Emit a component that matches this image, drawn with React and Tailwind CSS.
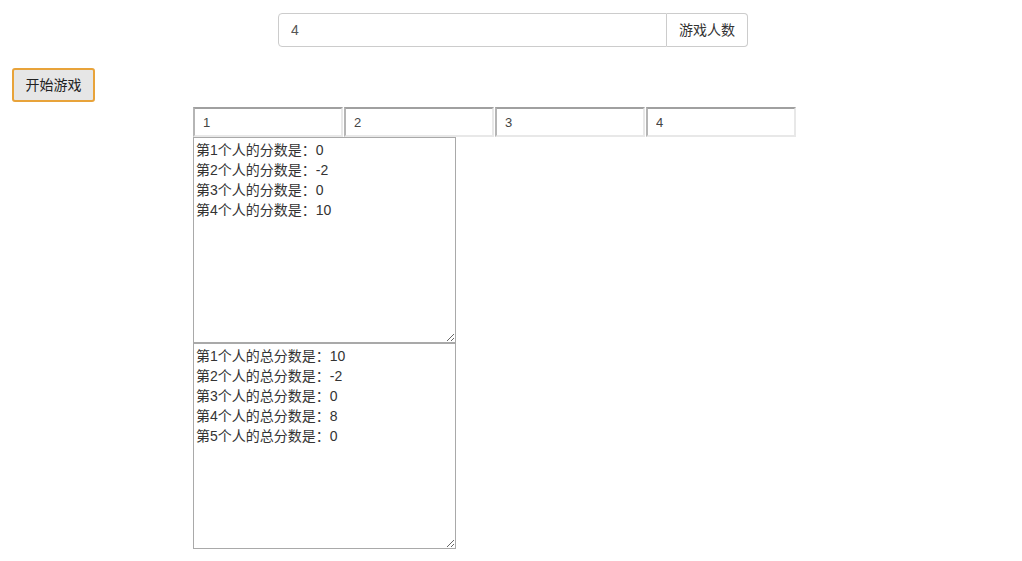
import { useState } from 'react';

const font = { fontFamily: '"Liberation Sans", "Noto Sans CJK SC", sans-serif' };

const App = () => {
    const [count, setCount] = useState('4');
    const players = ['1', '2', '3', '4'];
    const round = '第1个人的分数是：0\n第2个人的分数是：-2\n第3个人的分数是：0\n第4个人的分数是：10';
    const total = '第1个人的总分数是：10\n第2个人的总分数是：-2\n第3个人的总分数是：0\n第4个人的总分数是：8\n第5个人的总分数是：0';

    return (
        <div className="min-h-[561px] bg-white text-[#333]" style={font}>
            {/* Player count */}
            <div className="flex justify-center pt-[13px] pl-[4px]">
                <div className="flex w-[470px] h-[34px]">
                    <input
                        value={count}
                        onChange={e => setCount(e.target.value)}
                        className="flex-1 h-full border border-[#ccc] rounded-l-[4px] px-[12px] text-[14px] text-[#555] outline-none"
                        style={font}
                    />
                    <span className="flex items-center px-[12px] border border-l-0 border-[#ccc] rounded-r-[4px] bg-white text-[14px] text-[#333]">
                        游戏人数
                    </span>
                </div>
            </div>

            {/* Start */}
            <div className="pl-[12px] pt-[21px]">
                <button className="w-[83px] h-[34px] rounded-[3px] border-2 border-[#e8a33a] bg-[#e6e6e6] text-[14px] text-[#222]" style={font}>
                    开始游戏
                </button>
            </div>

            {/* Board */}
            <div className="pl-[193px] pt-[5px]">
                <div className="flex gap-[1px]">
                    {players.map(p => (
                        <input
                            key={p}
                            defaultValue={p}
                            className="w-[150px] h-[30px] border-2 border-[#a0a0a0] border-r-[#e8e8e8] border-b-[#e8e8e8] border-l-[#b5b5b5] px-[8px] text-[13px] text-[#444] outline-none"
                            style={font}
                        />
                    ))}
                </div>
                <div className="flex flex-col w-[263px]">
                    <textarea
                        defaultValue={round}
                        className="w-[263px] h-[206px] border border-[#a9a9a9] p-[2px] text-[14px] leading-[20px] text-[#333] resize outline-none"
                        style={font}
                    />
                    <textarea
                        defaultValue={total}
                        className="w-[263px] h-[206px] border border-[#a9a9a9] p-[2px] text-[14px] leading-[20px] text-[#333] resize outline-none"
                        style={font}
                    />
                </div>
            </div>
        </div>
    );
};

export default App;
